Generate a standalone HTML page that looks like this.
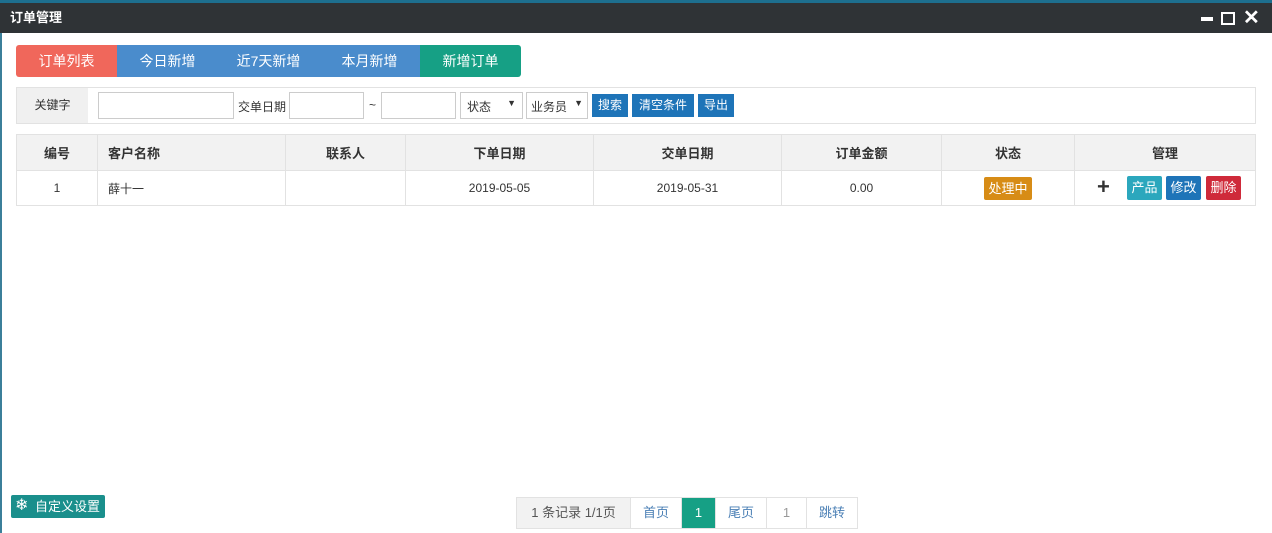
<!DOCTYPE html>
<html><head><meta charset="utf-8"><style>
*{box-sizing:border-box;margin:0;padding:0}
body{width:1272px;height:533px;overflow:hidden;background:#fff;font-family:"Liberation Sans","Noto Sans CJK SC",sans-serif;font-size:12px;color:#333;position:relative}
.top{position:absolute;left:0;top:0;width:1272px;height:4px;background:#1d6f8f}
.bar{position:absolute;left:0;top:3px;width:1272px;height:30px;background:#2f3336;color:#fff;font-weight:bold;font-size:13px;line-height:30px;padding-left:10px}
.edge{position:absolute;left:0;top:33px;width:2px;height:500px;background:#3b7f9a}
.tabs{position:absolute;left:16px;top:45px;height:32px;display:flex;border-radius:3px;overflow:hidden}
.tabs div{width:101px;color:#fff;font-size:14px;text-align:center;line-height:32px;background:#4a8ccc}
.search{position:absolute;left:16px;top:87px;width:1240px;height:37px;border:1px solid #e2e2e2}
.abs{position:absolute}
.inp{position:absolute;top:4px;height:27px;border:1px solid #ccc;background:#fff}
.btn{position:absolute;top:6px;height:23px;line-height:23px;color:#fff;background:#1e74b8;text-align:center;font-size:12px}
table{position:absolute;left:16px;top:134px;width:1240px;border-collapse:collapse}
td,th{border:1px solid #e2e2e2;height:36px;text-align:center;font-size:13px}
th{background:#f2f2f2;font-weight:bold}
td{font-size:12px;height:35px}
.b{position:absolute;top:5px;color:#fff;width:35px;text-align:center;height:24px;line-height:24px;border-radius:2px;font-size:13px}
.pg{position:absolute;top:497px;left:516px;height:32px;border:1px solid #e2e2e2;width:342px}
.pg div{position:absolute;top:0;height:30px;line-height:30px;text-align:center;border-right:1px solid #e2e2e2;color:#4a7fb5;font-size:13px}
</style></head><body>
<div class="top"></div>
<div class="bar">订单管理
<span style="position:absolute;left:1201px;top:14px;width:12px;height:4px;background:#fff"></span>
<span style="position:absolute;left:1221px;top:9px;width:14px;height:13px;border:2px solid #fff"></span>
<span style="position:absolute;left:1243px;top:0;font-size:20px">✕</span></div>
<div class="edge"></div>
<div class="tabs"><div style="background:#f0675b">订单列表</div><div>今日新增</div><div>近7天新增</div><div>本月新增</div><div style="background:#16a085">新增订单</div></div>
<div class="search">
<div class="abs" style="left:0;top:0;width:71px;height:35px;background:#f0f0f0;line-height:35px;text-align:center">关键字</div>
<div class="inp" style="left:81px;width:136px"></div>
<div class="abs" style="left:221px;top:10px">交单日期</div>
<div class="inp" style="left:272px;width:75px"></div>
<div class="abs" style="left:352px;top:10px">~</div>
<div class="inp" style="left:364px;width:75px"></div>
<div class="inp" style="left:443px;width:63px;padding:5px 6px">状态<span style="float:right;font-size:9px">▼</span></div>
<div class="inp" style="left:509px;width:62px;padding:5px 4px">业务员<span style="float:right;font-size:9px">▼</span></div>
<div class="btn" style="left:575px;width:36px">搜索</div>
<div class="btn" style="left:615px;width:62px">清空条件</div>
<div class="btn" style="left:681px;width:36px">导出</div>
</div>
<table><tr><th style="width:81px">编号</th><th style="width:188px;text-align:left;padding-left:10px">客户名称</th><th style="width:120px">联系人</th><th style="width:188px">下单日期</th><th style="width:188px">交单日期</th><th style="width:160px">订单金额</th><th style="width:133px">状态</th><th>管理</th></tr>
<tr><td>1</td><td style="text-align:left;padding-left:10px">薛十一</td><td></td><td>2019-05-05</td><td>2019-05-31</td><td>0.00</td><td><span style="display:inline-block;background:#d78c16;color:#fff;padding:0 4px;height:23px;line-height:23px;border-radius:2px;font-size:13px">处理中</span></td>
<td style="position:relative"><span style="position:absolute;left:22px;top:3px;font-size:22px;font-weight:bold;line-height:26px">+</span><span class="b" style="left:52px;background:#2ba7bd">产品</span><span class="b" style="left:91px;background:#1e74b8">修改</span><span class="b" style="left:131px;background:#cf2a3a">删除</span></td></tr></table>
<div class="abs" style="left:11px;top:495px;width:94px;height:23px;background:#1a8f8c;color:#fff;font-size:13px;line-height:23px;padding-left:24px;border-radius:2px"><span style="position:absolute;left:4px;top:2px;font-size:16px;line-height:18px">❄</span>自定义设置</div>
<div class="pg"><div style="left:0;width:114px;color:#555;background:#f2f2f2">1 条记录 1/1页</div><div style="left:114px;width:51px">首页</div><div style="left:165px;width:34px;background:#16a085;color:#fff">1</div><div style="left:199px;width:51px">尾页</div><div style="left:250px;width:40px;color:#999">1</div><div style="left:290px;width:50px;border-right:0">跳转</div></div>
</body></html>
